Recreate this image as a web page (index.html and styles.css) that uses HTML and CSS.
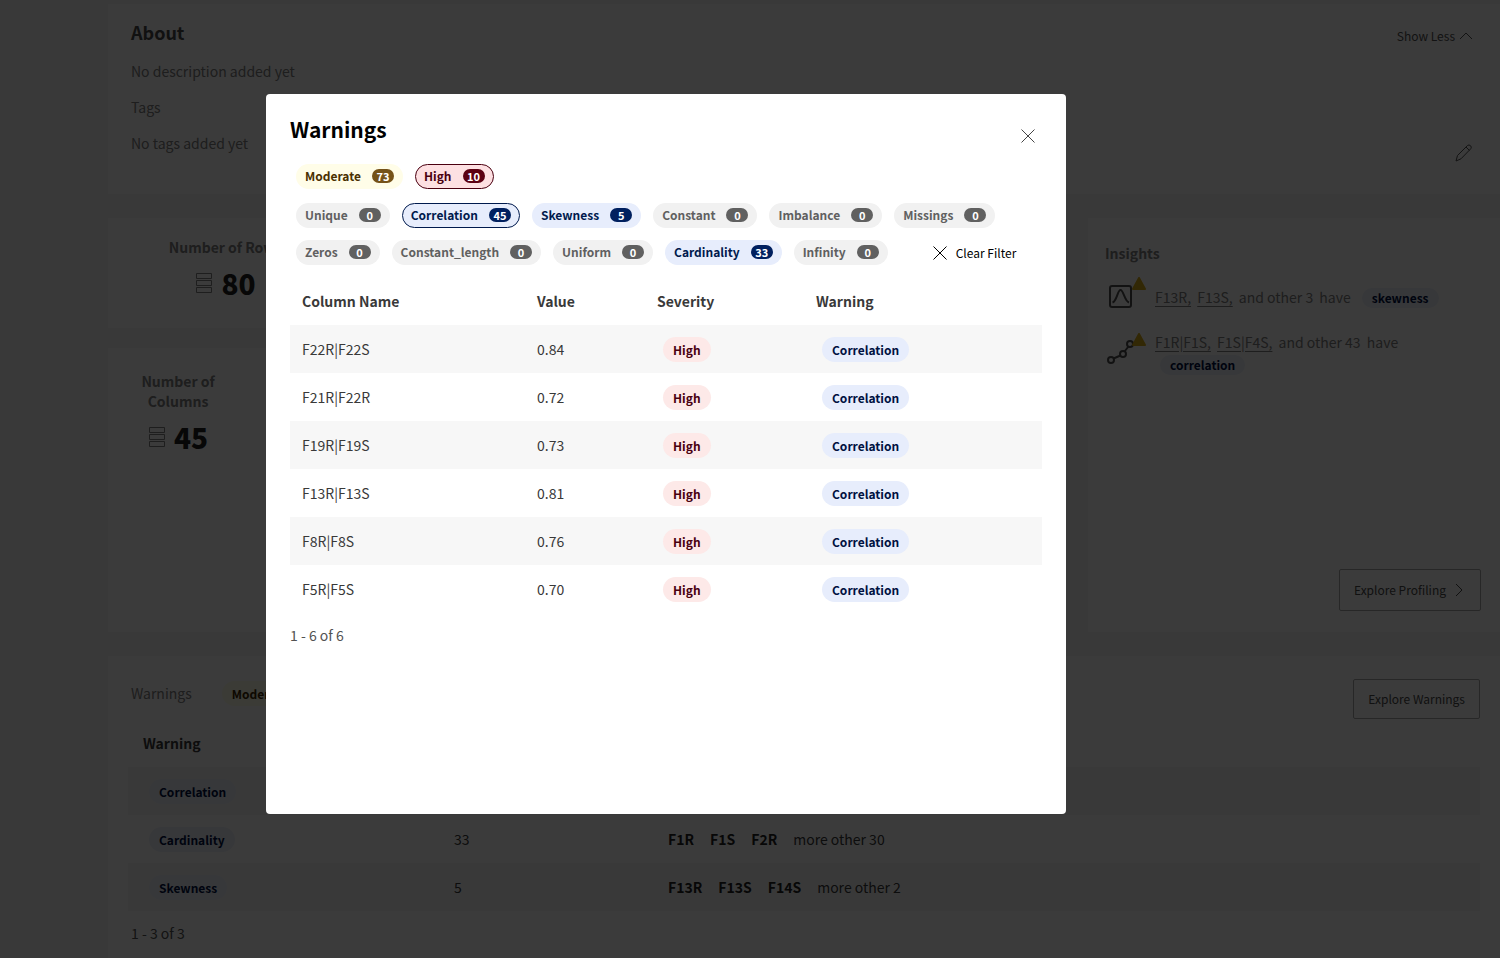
FILE: index.html
```
<!DOCTYPE html>
<html lang="en">
<head>
<meta charset="utf-8">
<title>Warnings</title>
<meta name="viewport" content="width=device-width, initial-scale=1">
<link rel="stylesheet" href="styles.css">
</head>
<body>
<main class="page">
  <section class="card about">
    <div class="about-text">
      <h2 class="about-title">About</h2>
      <p>No description added yet</p>
      <p>Tags</p>
      <p>No tags added yet</p>
    </div>
    <div class="about-actions">
      <button class="link-button" type="button">Show Less
        <svg width="14" height="14" viewBox="0 0 14 14"><path d="M1 10l6-6 6 6"/></svg>
      </button>
      <button class="icon-button" type="button" aria-label="Edit tags">
        <svg width="18" height="18" viewBox="0 0 18 18"><path d="M1 17l1.500-5.500L12.500 1.500q1.500-1.200 3 .2t.3 3L6 14.800zM11 3l3.500 3.500"/></svg>
      </button>
    </div>
  </section>

  <div class="overview">
    <div class="stats">
      <section class="card stat-card">
        <div class="stat stat-wide">
          <h3>Number of Rows</h3>
          <div class="stat-value">
            <svg width="18" height="22" viewBox="0 0 18 22"><path d="M1.500 1.500h15v5h-15zM1.500 8.500h15v5h-15zM1.500 15.500h15v5h-15z"/></svg>
            <strong>80</strong>
          </div>
        </div>
      </section>
      <section class="card stat-card">
        <div class="stat stat-narrow">
          <h3>Number of Columns</h3>
          <div class="stat-value">
            <svg width="18" height="22" viewBox="0 0 18 22"><path d="M1.500 1.500h15v5h-15zM1.500 8.500h15v5h-15zM1.500 15.500h15v5h-15z"/></svg>
            <strong>45</strong>
          </div>
        </div>
      </section>
    </div>
    <section class="card insights">
      <h3>Insights</h3>
      <div class="insight">
        <span class="insight-icon">
          <svg width="28" height="28" viewBox="0 0 28 28"><rect x="3" y="4" width="21" height="21" rx="2"/><path d="M5.500 20.500C10 19 10.500 8 13.500 8s4 11 8.500 12.500"/></svg>
          <svg class="alert" width="14" height="13" viewBox="0 0 14 13"><path d="M7 1l6 11H1z"/></svg>
        </span>
        <p><a href="#f13r">F13R,</a> <a href="#f13s">F13S,</a> <span>and other 3</span> <span>have</span> <span class="tag tag-blue">skewness</span></p>
      </div>
      <div class="insight">
        <span class="insight-icon">
          <svg width="28" height="28" viewBox="0 0 28 28"><circle cx="4" cy="22" r="3"/><circle cx="16" cy="16" r="3"/><circle cx="23" cy="6" r="3"/><path d="M6.500 20.500l7-3M17.500 13.500l4-5"/></svg>
          <svg class="alert" width="14" height="13" viewBox="0 0 14 13"><path d="M7 1l6 11H1z"/></svg>
        </span>
        <p><a href="#f1r-f1s">F1R|F1S,</a> <a href="#f1s-f4s">F1S|F4S,</a> <span>and other 43</span> <span>have</span><br><span class="tag tag-blue">correlation</span></p>
      </div>
      <button class="outline-button explore-profiling" type="button">Explore Profiling
        <svg width="14" height="14" viewBox="0 0 14 14"><path d="M4 1l6 6-6 6"/></svg>
      </button>
    </section>
  </div>

  <section class="card summary">
    <header class="summary-head">
      <h3>Warnings</h3>
      <span class="tag tag-yellow">Moderate</span>
      <button class="outline-button explore-warnings" type="button">Explore Warnings</button>
    </header>
    <table class="table summary-table">
      <thead><tr><th>Warning</th><th>Count</th><th>Columns</th></tr></thead>
      <tbody>
        <tr><td><span class="tag tag-blue">Correlation</span></td><td>45</td><td><span class="names"><b>F1R</b><b>F1S</b><b>F2R</b>more other 42</span></td></tr>
        <tr><td><span class="tag tag-blue">Cardinality</span></td><td>33</td><td><span class="names"><b>F1R</b><b>F1S</b><b>F2R</b>more other 30</span></td></tr>
        <tr><td><span class="tag tag-blue">Skewness</span></td><td>5</td><td><span class="names"><b>F13R</b><b>F13S</b><b>F14S</b>more other 2</span></td></tr>
      </tbody>
    </table>
    <p class="range">1 - 3 of 3</p>
  </section>
</main>

<div class="overlay">
  <div class="modal" role="dialog" aria-modal="true" aria-labelledby="modal-title">
    <header class="modal-head">
      <h1 id="modal-title">Warnings</h1>
      <button class="close" type="button" aria-label="Close">
        <svg width="14" height="14" viewBox="0 0 14 14"><path d="M.5.5l13 13M13.500.5l-13 13"/></svg>
      </button>
    </header>
    <div class="chips severity-chips">
      <button class="chip yellow" type="button">Moderate <span>73</span></button>
      <button class="chip red selected" type="button">High <span>10</span></button>
    </div>
    <div class="chips">
      <button class="chip" type="button">Unique <span>0</span></button>
      <button class="chip blue selected" type="button">Correlation <span>45</span></button>
      <button class="chip blue" type="button">Skewness <span>5</span></button>
      <button class="chip" type="button">Constant <span>0</span></button>
      <button class="chip" type="button">Imbalance <span>0</span></button>
      <button class="chip" type="button">Missings <span>0</span></button>
      <button class="chip" type="button">Zeros <span>0</span></button>
      <button class="chip" type="button">Constant_length <span>0</span></button>
      <button class="chip" type="button">Uniform <span>0</span></button>
      <button class="chip blue" type="button">Cardinality <span>33</span></button>
      <button class="chip" type="button">Infinity <span>0</span></button>
      <button class="clear" type="button"><svg width="14" height="14" viewBox="0 0 14 14"><path d="M.5.5l13 13M13.500.5l-13 13"/></svg>Clear Filter</button>
    </div>
    <table class="table modal-table">
      <thead><tr><th>Column Name</th><th>Value</th><th>Severity</th><th>Warning</th></tr></thead>
      <tbody>
        <tr><td>F22R|F22S</td><td>0.84</td><td><span class="tag tag-red">High</span></td><td><span class="tag tag-blue">Correlation</span></td></tr>
        <tr><td>F21R|F22R</td><td>0.72</td><td><span class="tag tag-red">High</span></td><td><span class="tag tag-blue">Correlation</span></td></tr>
        <tr><td>F19R|F19S</td><td>0.73</td><td><span class="tag tag-red">High</span></td><td><span class="tag tag-blue">Correlation</span></td></tr>
        <tr><td>F13R|F13S</td><td>0.81</td><td><span class="tag tag-red">High</span></td><td><span class="tag tag-blue">Correlation</span></td></tr>
        <tr><td>F8R|F8S</td><td>0.76</td><td><span class="tag tag-red">High</span></td><td><span class="tag tag-blue">Correlation</span></td></tr>
        <tr><td>F5R|F5S</td><td>0.70</td><td><span class="tag tag-red">High</span></td><td><span class="tag tag-blue">Correlation</span></td></tr>
      </tbody>
    </table>
    <p class="range">1 - 6 of 6</p>
  </div>
</div>
</body>
</html>
```
FILE: styles.css
```
* { box-sizing: border-box; }

body {
  margin: 0;
  overflow: hidden;
  height: 100vh;
  background: #f4f4f4;
  color: #393939;
  font: 14px/20px "Noto Sans CJK SC", "Noto Sans", sans-serif;
}

h1, h2, h3, p { margin: 0; }
button { font: inherit; color: inherit; background: none; border: 0; padding: 0; cursor: pointer; }
svg { display: block; flex: none; fill: none; stroke: currentColor; }

/* Page behind the dialog */
.page {
  display: flex;
  flex-direction: column;
  gap: 24px;
  padding-top: 4px;
  margin-left: 108px;
}
.card { background: #fff; }

.about {
  display: flex;
  justify-content: space-between;
  height: 190px;
  padding: 15px 27px 0 23px;
  color: #808080;
}
.about-text { display: flex; flex-direction: column; gap: 16px; }
.about-title { font-size: 18px; line-height: 26px; color: #4a4a4a; }
.about-actions {
  display: flex;
  flex-direction: column;
  align-items: flex-end;
  justify-content: space-between;
  padding: 7px 0 32px;
  color: #525252;
}
.link-button { display: flex; align-items: center; gap: 4px; font-size: 12px; }

.overview { display: grid; grid-template-columns: 1fr 412px; gap: 24px; }
.stats { display: grid; grid-template-rows: 110px 1fr; gap: 20px; }
.stat-card { padding-top: 19px; }
.stat { text-align: center; color: #808080; }
.stat h3 { font-size: 14px; }
.stat-wide { width: 235px; }
.stat-narrow { width: 140px; padding: 4px 24px 0; }
.stat-value { display: flex; align-items: center; justify-content: center; gap: 8px; height: 52px; }
.stat-value strong { font-size: 28px; line-height: 32px; font-weight: 900; color: #222; }

.insights {
  display: flex;
  flex-direction: column;
  gap: 13px;
  min-height: 414px;
  padding: 25px 19px 21px 17px;
  color: #808080;
}
.insights h3 { font-size: 14px; }
.insight { display: flex; align-items: center; gap: 18px; }
.insight p { padding-top: 10px; line-height: 22px; }
.insight a, .insight p > span { margin-right: 3px; }
.insight a { color: inherit; text-underline-offset: 3px; }
.insight-icon { position: relative; width: 32px; height: 32px; padding: 6px 2px 0; color: #505050; }
.insight-icon svg { stroke-width: 2; }
.insight-icon .alert {
  position: absolute;
  top: 1px;
  right: -9px;
  fill: #d9ac18;
  stroke: #d9ac18;
  stroke-linejoin: round;
}
.insight .tag { margin-left: 5px; line-height: 20px; }

.outline-button {
  display: flex;
  align-items: center;
  height: 40px;
  padding: 0 14px;
  border: 1px solid #a8a8a8;
  border-radius: 2px;
  font-size: 12px;
  color: #4a4a4a;
}
.explore-profiling { align-self: flex-end; gap: 6px; height: 42px; margin-top: auto; }

.summary { padding: 23px 20px 40px; }
.summary-head { display: flex; align-items: center; height: 40px; padding-left: 3px; color: #808080; }
.summary-head h3 { font-weight: 400; font-size: 14px; margin: 0 24px 12px 0; }
.summary-head .tag { margin-bottom: 12px; }
.explore-warnings { margin-left: auto; }
.summary .range { padding-left: 3px; }

/* Tables */
.table { width: 100%; table-layout: fixed; border-collapse: collapse; text-align: left; }
.table th, .table td { height: 48px; padding: 0 12px; vertical-align: middle; }
.table tbody tr:nth-child(odd) { background: #f7f7f7; }
.summary-table th, .summary-table td { padding-left: 15px; }
.summary-table th:nth-child(1) { width: 311px; }
.summary-table th:nth-child(2) { width: 214px; }
.names { display: flex; gap: 16px; }
.names b { color: #222; }
.modal-table th:nth-child(1) { width: 235px; }
.modal-table th:nth-child(2) { width: 120px; }
.modal-table th:nth-child(3) { width: 159px; }

.range { margin-top: 12px; color: #525252; }

/* Tags and filter chips */
.tag {
  display: inline-block;
  margin-left: 6px;
  padding: 0 10px;
  border-radius: 13px;
  font-size: 12px;
  line-height: 25px;
  font-weight: 700;
}
.tag-blue { background: #e7edfc; color: #001141; }
.tag-red { background: #fde9e8; color: #4a0010; }
.tag-yellow { background: #fffde8; color: #3b2500; }
.page .tag-blue { background: #edf2fb; }

.chips { display: flex; flex-wrap: wrap; gap: 12px; padding-left: 6px; }
.severity-chips { margin-bottom: 14px; }
.chip {
  display: flex;
  align-items: center;
  gap: 11px;
  height: 25px;
  padding: 0 8px 1px;
  border: 1px solid transparent;
  border-radius: 13px;
  background: #f1f1f1;
  color: #606060;
  font-size: 12px;
  line-height: 22px;
  font-weight: 700;
}
.chip span {
  width: 22px;
  border-radius: 7px;
  background: #606060;
  color: #fff;
  font-size: 11px;
  line-height: 14px;
}
.chip.yellow { background: #fffde8; color: #4a3000; }
.chip.yellow span { background: #755218; }
.chip.red { background: #fde0e2; color: #4a0010; }
.chip.red span { background: #5c0012; }
.chip.blue { background: #e7edfc; color: #001a4d; }
.chip.blue span { background: #00205f; }
.chip.selected { border-color: currentColor; }
.clear { display: flex; align-items: center; gap: 9px; margin-left: 33px; font-size: 12px; color: #000; }

/* Dialog */
.overlay {
  position: fixed;
  inset: 0;
  display: flex;
  align-items: flex-start;
  justify-content: center;
  padding: 94px 168px 94px 0;
  background: rgba(0, 0, 0, .77);
}
.modal {
  width: 800px;
  max-width: 100%;
  min-height: 720px;
  padding: 19px 24px;
  border-radius: 4px;
  background: #fff;
}
.modal .chips + .modal-table { margin-top: 12px; }
.modal-head { display: flex; justify-content: space-between; height: 51px; }
.modal-head h1 { font-size: 21px; line-height: 32px; color: #000; }
.close { align-self: flex-start; padding: 16px 7px 0 0; color: #444; }
```
